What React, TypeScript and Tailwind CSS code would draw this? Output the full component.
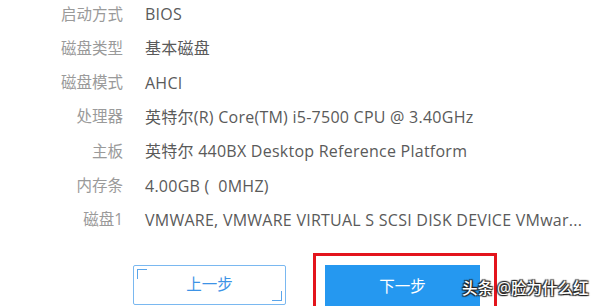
import React from "react";

const rows: [string, string][] = [
  ["启动方式", "BIOS"],
  ["磁盘类型", "基本磁盘"],
  ["磁盘模式", "AHCI"],
  ["处理器", "英特尔(R) Core(TM) i5-7500 CPU @ 3.40GHz"],
  ["主板", "英特尔 440BX Desktop Reference Platform"],
  ["内存条", "4.00GB (  0MHZ)"],
  ["磁盘1", "VMWARE, VMWARE VIRTUAL S SCSI DISK DEVICE VMwar..."],
];

export default function App() {
  return (
    <div
      className="relative w-[596px] h-[306px] overflow-hidden bg-white"
      style={{ fontFamily: '"Open Sans", "Noto Sans CJK SC", sans-serif' }}
    >
      <div className="flex flex-col -mt-[3px]">
        {rows.map(([k, v]) => (
          <div key={k} className="flex h-[34.3px] items-center">
            <div className="w-[123px] text-right text-[15.5px] text-[#9a9a9a]">{k}</div>
            <div className="ml-[22px] whitespace-pre text-[16px] tracking-[0.25px] text-[#5a5a5a]">{v}</div>
          </div>
        ))}
      </div>
      <div className="flex mt-[28px] ml-[133px] gap-[39px]">
        <button className="relative w-[153px] h-[40px] border border-[#7ab8f0] rounded-[2px] text-[15.5px] text-[#3d93e6] flex items-center justify-center">
          <span className="absolute left-[3px] top-[3px] w-[10px] h-[10px] border-l border-t border-[#5aa5ea]" />
          <span className="absolute right-[3px] bottom-[3px] w-[10px] h-[10px] border-r border-b border-[#5aa5ea]" />
          上一步
        </button>
        <button className="w-[155px] h-[44px] bg-[#2598f0] text-white text-[15.5px] flex items-center justify-center">
          下一步
        </button>
      </div>
      <div className="absolute left-[313px] top-[253px] w-[184px] h-[70px] border-[3px] border-[#e3141c]" />
      <div
        className="absolute left-[462px] top-[277px] text-[15.5px] font-medium text-white"
        style={{ textShadow: "1px 1px 1px #222, -1px -1px 1px #222, 1px -1px 1px #222, -1px 1px 1px #222" }}
      >
        头条 @脸为什么红
      </div>
    </div>
  );
}
